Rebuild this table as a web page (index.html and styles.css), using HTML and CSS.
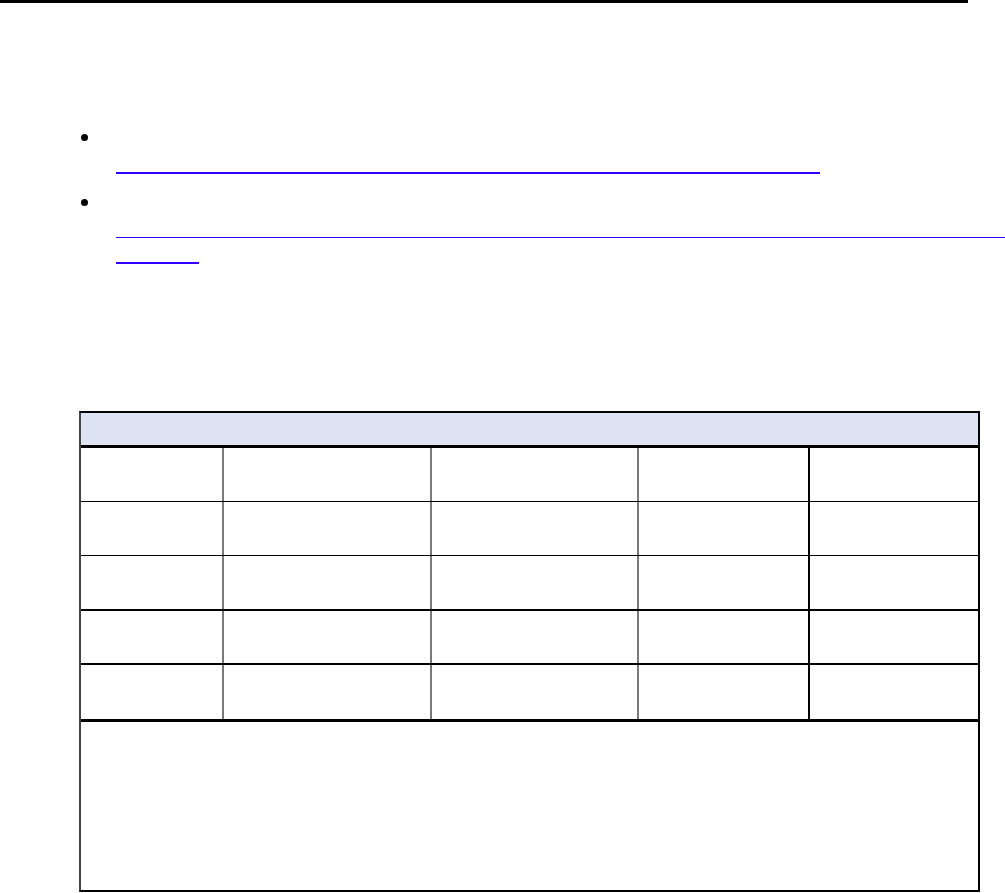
FILE: index.html
```html
<!DOCTYPE html>
<html lang="en">
<head>
<meta charset="utf-8">
<title>Document</title>
<link rel="stylesheet" href="styles.css">
</head>
<body>
<div class="topbar"></div>
<ul class="list">
  <li class="item item-one">
    <span class="bullet"></span>
    <div class="links">
      <a class="link link-long" href="#" aria-label="link"></a>
    </div>
  </li>
  <li class="item item-two">
    <span class="bullet"></span>
    <div class="links">
      <a class="link link-wide" href="#" aria-label="link"></a>
      <a class="link link-short" href="#" aria-label="link"></a>
    </div>
  </li>
</ul>
<div class="table">
  <div class="thead"></div>
  <div class="row row-a"><div class="cell c1"></div><div class="cell c2"></div><div class="cell c3"></div><div class="cell c4"></div><div class="cell c5"></div></div>
  <div class="row row-b"><div class="cell c1"></div><div class="cell c2"></div><div class="cell c3"></div><div class="cell c4"></div><div class="cell c5"></div></div>
  <div class="row row-c"><div class="cell c1"></div><div class="cell c2"></div><div class="cell c3"></div><div class="cell c4"></div><div class="cell c5"></div></div>
  <div class="row row-d"><div class="cell c1"></div><div class="cell c2"></div><div class="cell c3"></div><div class="cell c4"></div><div class="cell c5"></div></div>
  <div class="row row-e"><div class="cell c1"></div><div class="cell c2"></div><div class="cell c3"></div><div class="cell c4"></div><div class="cell c5"></div></div>
  <div class="tfoot"></div>
</div>
</body>
</html>
```

FILE: styles.css
```css
* { box-sizing: border-box; }
html, body { margin: 0; padding: 0; background: #fff; font-family: "Liberation Sans", Arial, sans-serif; }
body { width: 1005px; height: 893px; overflow: hidden; }

.topbar { width: 968px; height: 3px; background: #000; }

.list { list-style: none; margin: 131px 0 0 0; padding: 0 0 0 81px; }
.item { display: flex; flex-direction: column; }
.item-two { margin-top: 25px; }
.bullet { display: block; width: 7px; height: 7px; border-radius: 50%; background: #000; }
.links { display: flex; flex-direction: column; padding-left: 35px; }
.link { display: block; background: #3300ff; }
.link-long { margin-top: 31px; width: 704px; height: 2px; }
.link-wide { margin-top: 31px; width: 889px; height: 1px; }
.link-short { margin-top: 24px; width: 83px; height: 2px; }

.table {
  margin: 147px 0 0 79px;
  width: 901px;
  height: 481px;
  border: 2px solid #000;
  border-left-color: #444;
  display: flex;
  flex-direction: column;
}
.thead { height: 35px; flex: none; background: #dde3f0; border-bottom: 3px solid #000; }
.row { display: grid; flex: none; grid-template-columns: 143px 208px 207px 171px 1fr; }
.row-a { height: 54px; border-bottom: 1px solid #000; }
.row-b { height: 54px; border-bottom: 1px solid #000; }
.row-c { height: 55px; border-bottom: 2px solid #000; }
.row-d { height: 54px; border-bottom: 2px solid #000; }
.row-e { height: 57px; border-bottom: 3px solid #000; }
.cell { border-right: 2px solid #7a7a7a; }
.cell.c4 { border-right-color: #000; }
.cell.c5 { border-right: none; }
.tfoot { flex: 1; }
```
